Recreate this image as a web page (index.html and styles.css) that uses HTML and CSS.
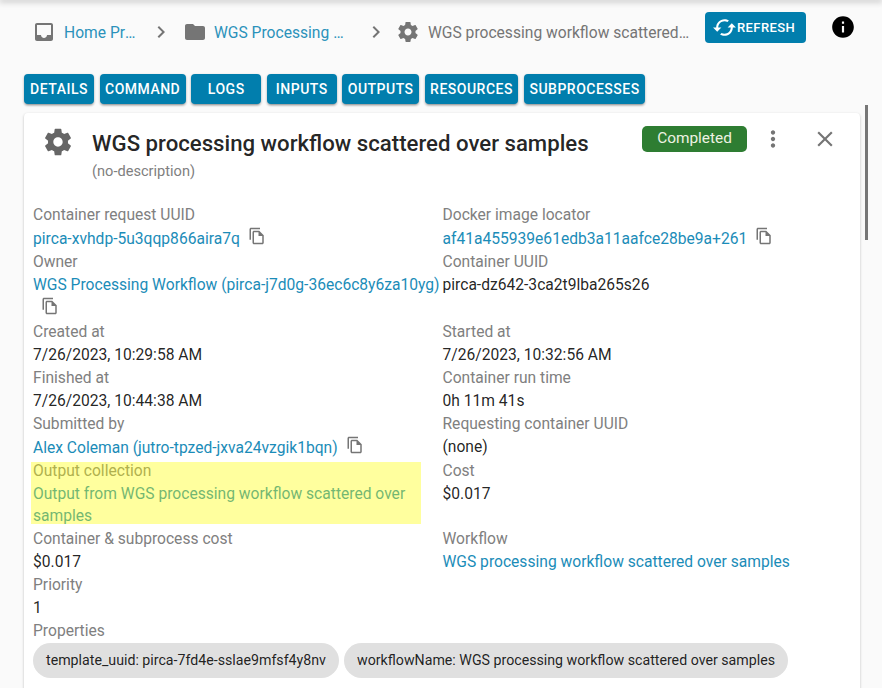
FILE: index.html
```html
<!DOCTYPE html>
<html lang="en">
<head>
    <meta charset="UTF-8">
    <title>WGS processing workflow scattered over samples</title>
    <link rel="stylesheet" href="styles.css">
</head>
<body>

<svg class="defs" width="0" height="0">
    <symbol id="i-inbox" viewBox="0 0 24 24"><path d="M19 3H4.99c-1.11 0-1.98.89-1.98 2L3 19c0 1.1.88 2 1.99 2H19c1.1 0 2-.9 2-2V5c0-1.11-.9-2-2-2zm0 12h-4c0 1.66-1.35 3-3 3s-3-1.34-3-3H4.99V5H19v10z"/></symbol>
    <symbol id="i-folder" viewBox="0 0 24 24"><path d="M10 4H4c-1.1 0-1.99.9-1.99 2L2 18c0 1.1.9 2 2 2h16c1.1 0 2-.9 2-2V8c0-1.1-.9-2-2-2h-8l-2-2z"/></symbol>
    <symbol id="i-chevron" viewBox="0 0 24 24"><path d="M8.59 16.59L13.17 12 8.59 7.41 10 6l6 6-6 6-1.41-1.41z"/></symbol>
    <symbol id="i-gear" viewBox="0 0 24 24"><path d="M19.43 12.98c.04-.32.07-.64.07-.98s-.03-.66-.07-.98l2.11-1.65c.19-.15.24-.42.12-.64l-2-3.46c-.12-.22-.39-.3-.61-.22l-2.49 1c-.52-.4-1.08-.73-1.69-.98l-.38-2.65C14.46 2.18 14.25 2 14 2h-4c-.25 0-.46.18-.49.42l-.38 2.65c-.61.25-1.17.59-1.69.98l-2.49-1c-.23-.09-.49 0-.61.22l-2 3.46c-.13.22-.07.49.12.64l2.11 1.65c-.04.32-.07.65-.07.98s.03.66.07.98l-2.11 1.65c-.19.15-.24.42-.12.64l2 3.46c.12.22.39.3.61.22l2.49-1c.52.4 1.08.73 1.69.98l.38 2.65c.03.24.24.42.49.42h4c.25 0 .46-.18.49-.42l.38-2.65c.61-.25 1.17-.59 1.69-.98l2.49 1c.23.09.49 0 .61-.22l2-3.46c.12-.22.07-.49-.12-.64l-2.11-1.65zM12 15.5c-1.93 0-3.5-1.57-3.5-3.5s1.57-3.5 3.5-3.5 3.5 1.57 3.5 3.5-1.57 3.5-3.5 3.5z"/></symbol>
    <symbol id="i-copy" viewBox="0 0 24 24"><path d="M16 1H4c-1.1 0-2 .9-2 2v14h2V3h12V1zm-1 4H8c-1.1 0-1.99.9-1.99 2L6 21c0 1.1.89 2 1.99 2H19c1.1 0 2-.9 2-2V11l-6-6zM8 21V7h6v5h5v9H8z"/></symbol>
</svg>

<div class="top-edge"></div>
<div class="scroll-thumb"></div>

<div class="toolbar">
    <svg class="crumb-icon"><use href="#i-inbox"/></svg>
    <a class="crumb crumb-home">Home Projects</a>
    <svg class="crumb-sep"><use href="#i-chevron"/></svg>
    <svg class="crumb-icon"><use href="#i-folder"/></svg>
    <a class="crumb crumb-folder">WGS Processing Workflow</a>
    <svg class="crumb-sep"><use href="#i-chevron"/></svg>
    <svg class="crumb-icon"><use href="#i-gear"/></svg>
    <span class="crumb crumb-current">WGS processing workflow scattered over samples</span>
    <button class="refresh">
        <svg viewBox="0 0 24 24"><path d="M19 8l-4 4h3c0 3.31-2.69 6-6 6-1.01 0-1.97-.25-2.8-.7l-1.46 1.46C8.97 19.54 10.43 20 12 20c4.42 0 8-3.58 8-8h3l-4-4zM6 12c0-3.31 2.69-6 6-6 1.01 0 1.97.25 2.8.7l1.46-1.46C15.03 4.46 13.57 4 12 4c-4.42 0-8 3.58-8 8H1l4 4 4-4H6z"/></svg>
        Refresh
    </button>
    <svg class="info" viewBox="0 0 24 24"><path d="M12 2C6.48 2 2 6.48 2 12s4.48 10 10 10 10-4.48 10-10S17.52 2 12 2zm1 15h-2v-6h2v6zm0-8h-2V7h2v2z"/></svg>
</div>

<div class="tabs">
    <button class="tab">Details</button>
    <button class="tab">Command</button>
    <button class="tab">Logs</button>
    <button class="tab">Inputs</button>
    <button class="tab">Outputs</button>
    <button class="tab">Resources</button>
    <button class="tab">Subprocesses</button>
</div>

<div class="card">
    <div class="card-head">
        <svg class="card-gear"><use href="#i-gear"/></svg>
        <div class="card-title">
            <h1>WGS processing workflow scattered over samples</h1>
            <p>(no-description)</p>
        </div>
        <div class="status">Completed</div>
        <svg class="head-btn more" viewBox="0 0 24 24"><path d="M12 8c1.1 0 2-.9 2-2s-.9-2-2-2-2 .9-2 2 .9 2 2 2zm0 2c-1.1 0-2 .9-2 2s.9 2 2 2 2-.9 2-2-.9-2-2-2zm0 6c-1.1 0-2 .9-2 2s.9 2 2 2 2-.9 2-2-.9-2-2-2z"/></svg>
        <svg class="head-btn close" viewBox="0 0 24 24"><path d="M19 6.41L17.59 5 12 10.59 6.41 5 5 6.41 10.59 12 5 17.59 6.41 19 12 13.41 17.59 19 19 17.59 13.41 12 19 6.41z"/></svg>
    </div>

    <div class="attrs">
        <div class="attr">
            <div class="label">Container request UUID</div>
            <a class="link">pirca-xvhdp-5u3qqp866aira7q</a><svg class="copy"><use href="#i-copy"/></svg>
        </div>
        <div class="attr">
            <div class="label">Docker image locator</div>
            <a class="link">af41a455939e61edb3a11aafce28be9a+261</a><svg class="copy"><use href="#i-copy"/></svg>
        </div>
        <div class="attr">
            <div class="label">Owner</div>
            <a class="link">WGS Processing Workflow (pirca-j7d0g-36ec6c8y6za10yg)</a><svg class="copy"><use href="#i-copy"/></svg>
        </div>
        <div class="attr">
            <div class="label">Container UUID</div>
            <div class="value">pirca-dz642-3ca2t9lba265s26</div>
        </div>
        <div class="attr">
            <div class="label">Created at</div>
            <div class="value">7/26/2023, 10:29:58 AM</div>
        </div>
        <div class="attr">
            <div class="label">Started at</div>
            <div class="value">7/26/2023, 10:32:56 AM</div>
        </div>
        <div class="attr">
            <div class="label">Finished at</div>
            <div class="value">7/26/2023, 10:44:38 AM</div>
        </div>
        <div class="attr">
            <div class="label">Container run time</div>
            <div class="value">0h 11m 41s</div>
        </div>
        <div class="attr">
            <div class="label">Submitted by</div>
            <a class="link">Alex Coleman (jutro-tpzed-jxva24vzgik1bqn)</a><svg class="copy"><use href="#i-copy"/></svg>
        </div>
        <div class="attr">
            <div class="label">Requesting container UUID</div>
            <div class="value">(none)</div>
        </div>
        <div class="attr output">
            <div class="label">Output collection</div>
            <a class="link">Output from WGS processing workflow scattered over samples</a>
            <div class="highlight"></div>
        </div>
        <div class="attr">
            <div class="label">Cost</div>
            <div class="value">$0.017</div>
        </div>
        <div class="attr">
            <div class="label">Container &amp; subprocess cost</div>
            <div class="value">$0.017</div>
        </div>
        <div class="attr">
            <div class="label">Workflow</div>
            <a class="link">WGS processing workflow scattered over samples</a>
        </div>
        <div class="attr">
            <div class="label">Priority</div>
            <div class="value">1</div>
        </div>
        <div class="attr"></div>
        <div class="attr wide">
            <div class="label">Properties</div>
            <div class="chips">
                <span class="chip">template_uuid: pirca-7fd4e-sslae9mfsf4y8nv</span>
                <span class="chip">workflowName: WGS processing workflow scattered over samples</span>
            </div>
        </div>
    </div>
</div>

</body>
</html>
```

FILE: styles.css
```css
*{
    margin: 0;
    padding: 0;
    box-sizing: border-box;
}

html, body{
    height: 688px;
    overflow: hidden;
}

body{
    position: relative;
    background-color: #fafafa;
    font-family: Roboto, "Liberation Sans", sans-serif;
    font-size: 15.62px;
    line-height: 23.05px;
    color: rgba(0, 0, 0, 0.87);
}

.defs{
    position: absolute;
}

.top-edge{
    height: 0;
    box-shadow: 0 0 6px 1px rgba(0, 0, 0, 0.45);
}

.scroll-thumb{
    position: absolute;
    left: 865px;
    top: 105px;
    width: 3px;
    height: 135px;
    background-color: #777;
}

/* breadcrumbs */
.toolbar{
    display: flex;
    align-items: flex-start;
    height: 74px;
    padding: 12px 0 0 32px;
}

.crumb-icon{
    width: 24px;
    height: 24px;
    margin-top: 8px;
    fill: #757575;
    flex: none;
}

.crumb-sep{
    width: 24px;
    height: 24px;
    margin-top: 8px;
    fill: #757575;
    flex: none;
}

.crumb{
    margin: 10px 0 0 8px;
    overflow: hidden;
    white-space: nowrap;
    text-overflow: ellipsis;
    font-size: 15.62px;
    color: #2b92bb;
    flex: none;
}

.crumb-home{
    width: 72px;
    margin-right: 13px;
}

.crumb-home + .crumb-sep{
    margin-right: 10px;
}

.crumb-folder{
    width: 133px;
    margin-left: 7px;
    margin-right: 17px;
}

.crumb-folder + .crumb-sep{
    margin-right: 8px;
}

.crumb-current{
    width: 262px;
    color: #757575;
}

.refresh{
    display: flex;
    align-items: center;
    width: 101px;
    height: 31px;
    margin-left: 15px;
    padding-left: 7px;
    border: none;
    border-radius: 4px;
    background-color: #017ead;
    font-family: Roboto, "Liberation Sans", sans-serif;
    font-size: 13px;
    font-weight: 500;
    letter-spacing: 0.4px;
    text-transform: uppercase;
    color: #fff;
}

.refresh svg{
    width: 25px;
    height: 25px;
    fill: #fff;
}

.info{
    width: 26px;
    height: 26px;
    margin: 2px 0 0 24px;
    fill: #000;
}

/* tabs */
.tabs{
    display: flex;
    gap: 5.5px;
    margin: 0 0 9px 24px;
}

.tab{
    min-width: 70px;
    height: 30px;
    padding: 0 5.5px;
    border: none;
    border-radius: 4px;
    background-color: #017ead;
    box-shadow: 0 1px 3px rgba(0, 0, 0, 0.2), 0 2px 2px rgba(0, 0, 0, 0.14), 0 3px 1px -2px rgba(0, 0, 0, 0.12);
    font-family: Roboto, "Liberation Sans", sans-serif;
    font-size: 14px;
    font-weight: 500;
    letter-spacing: 0.5px;
    text-transform: uppercase;
    color: #fff;
}

/* card */
.card{
    width: 836px;
    height: 640px;
    margin-left: 24px;
    border-radius: 4px;
    background-color: #fff;
    box-shadow: 0 1px 3px rgba(0, 0, 0, 0.2), 0 1px 1px rgba(0, 0, 0, 0.14), 0 2px 1px -1px rgba(0, 0, 0, 0.12);
}

.card-head{
    display: flex;
    align-items: flex-start;
    padding: 13px 22px 0 18px;
}

.card-gear{
    width: 32px;
    height: 32px;
    margin-right: 18px;
    fill: #666;
    flex: none;
}

.card-title{
    flex: 1;
    padding-top: 2px;
}

.card-title h1{
    font-size: 22.2px;
    font-weight: 500;
    line-height: 30px;
}

.card-title p{
    margin-top: 1.5px;
    font-size: 14.6px;
    color: #808080;
}

.status{
    width: 105px;
    height: 26px;
    border-radius: 5px;
    background-color: #2e7d32;
    font-size: 15.4px;
    line-height: 25px;
    text-align: center;
    color: #eef2e2;
}

.head-btn{
    width: 26px;
    height: 26px;
    fill: #757575;
}

.more{
    margin-left: 13px;
}

.close{
    margin-left: 26px;
}

/* attributes */
.attrs{
    display: grid;
    grid-template-columns: 409.5px 1fr;
    margin-top: 21px;
    padding-left: 9px;
}

.attr{
    position: relative;
}

.wide{
    grid-column: 1 / 3;
}

.label{
    color: #808080;
}

.link{
    color: #1b8cb8;
}

.copy{
    width: 18px;
    height: 18px;
    margin-left: 8px;
    fill: #757575;
    vertical-align: -1px;
}

.output{
    line-height: 22.7px;
}

.output .link{
    display: block;
}

/* sits on top of the text and tints it */
.highlight{
    position: absolute;
    left: -2px;
    top: 2px;
    width: 390px;
    height: 62px;
    background-color: rgba(255, 255, 0, 0.38);
}

.chips{
    display: flex;
    gap: 5px;
}

.chip{
    height: 35px;
    padding: 0 13px;
    border-radius: 18px;
    background-color: #e0e0e0;
    font-size: 14.2px;
    line-height: 35px;
    white-space: nowrap;
}
```
